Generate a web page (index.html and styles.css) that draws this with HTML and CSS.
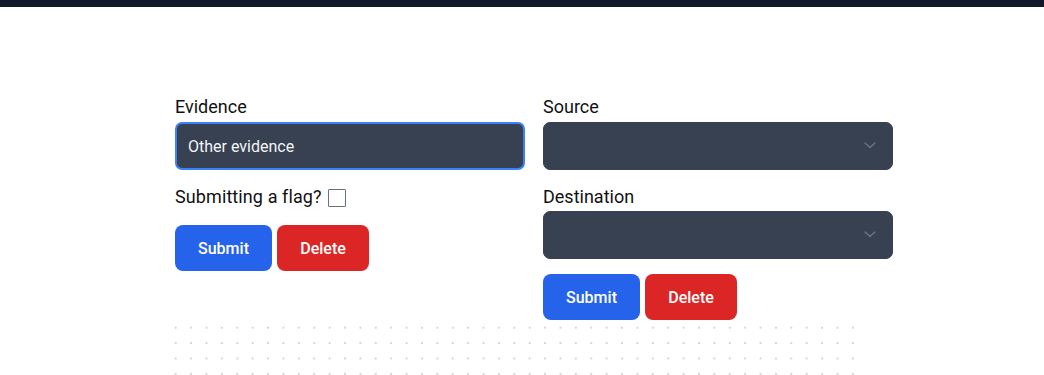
FILE: index.html
```html
<!DOCTYPE html>
<html lang="en">
<head>
  <meta charset="UTF-8">
  <title>Evidence</title>
  <link rel="stylesheet" href="styles.css">
</head>
<body>

  <!-- Top bar -->
  <div class="topbar"></div>

  <main class="page">
    <div class="forms">

      <!-- Evidence form -->
      <form class="col">
        <label for="evidence-input">Evidence</label>
        <input type="text" id="evidence-input" class="field field-focus" value="Other evidence">

        <div class="flag-row">
          <span>Submitting a flag?</span>
          <span class="checkbox"></span>
        </div>

        <div class="buttons buttons-left">
          <button type="button" class="btn btn-submit">Submit</button>
          <button type="button" class="btn btn-delete">Delete</button>
        </div>
      </form>

      <!-- Link form -->
      <form class="col">
        <label for="source-select">Source</label>
        <div class="select-wrap">
          <select id="source-select" class="field"></select>
          <svg class="chevron" width="12" height="7" viewBox="0 0 12 7"><path d="M1 1l5 4.5L11 1" fill="none" stroke="#6b7280" stroke-width="1.5" stroke-linecap="round" stroke-linejoin="round"/></svg>
        </div>

        <label for="dest-select" class="label-gap">Destination</label>
        <div class="select-wrap">
          <select id="dest-select" class="field"></select>
          <svg class="chevron" width="12" height="7" viewBox="0 0 12 7"><path d="M1 1l5 4.5L11 1" fill="none" stroke="#6b7280" stroke-width="1.5" stroke-linecap="round" stroke-linejoin="round"/></svg>
        </div>

        <div class="buttons">
          <button type="button" class="btn btn-submit">Submit</button>
          <button type="button" class="btn btn-delete">Delete</button>
        </div>
      </form>

    </div>

    <div class="dots"></div>
  </main>

</body>
</html>
```

FILE: styles.css
```css
body {
  margin: 0;
  padding: 0;
  background: #ffffff;
  font-family: Roboto, "Liberation Sans", sans-serif;
  font-size: 16px;
  color: #111111;
}

.topbar {
  height: 7px;
  background-color: #111827;
}

.page {
  padding: 88px 0 0 175px;
}

.forms {
  display: grid;
  grid-template-columns: 350px 350px;
  column-gap: 18px;
  align-items: start;
}

.col {
  display: flex;
  flex-direction: column;
  margin: 0;
}

label {
  display: block;
  font-size: 18px;
  line-height: 24px;
  margin-bottom: 3px;
}

.label-gap {
  margin-top: 15px;
  margin-bottom: 2px;
}

.field {
  box-sizing: border-box;
  width: 100%;
  height: 48px;
  margin: 0;
  padding: 0 12px;
  border: 1px solid #374151;
  border-radius: 7px;
  background-color: #374151;
  color: #f3f4f6;
  font-family: Roboto, "Liberation Sans", sans-serif;
  font-size: 16px;
  outline: none;
  appearance: none;
  -webkit-appearance: none;
}

.field-focus {
  border: 2px solid #3b82f6;
  padding-left: 11px;
}

.select-wrap {
  position: relative;
}

.chevron {
  position: absolute;
  right: 17px;
  top: 20px;
  pointer-events: none;
}

.flag-row {
  display: flex;
  align-items: center;
  gap: 6px;
  margin-top: 15px;
  font-size: 18px;
  line-height: 24px;
  letter-spacing: 0.1px;
}

.checkbox {
  box-sizing: border-box;
  width: 18px;
  height: 18px;
  margin-top: 1px;
  border: 1px solid #6b7280;
  border-radius: 1px;
  background: #ffffff;
}

.buttons {
  display: flex;
  gap: 5px;
  margin-top: 15px;
}

.buttons-left {
  margin-top: 16px;
}

.btn {
  height: 46px;
  padding: 0;
  border: none;
  border-radius: 8px;
  color: #ffffff;
  font-family: Roboto, "Liberation Sans", sans-serif;
  font-size: 16px;
  font-weight: 500;
  cursor: pointer;
}

.btn-submit {
  width: 97px;
  background-color: #2563eb;
}

.btn-delete {
  width: 92px;
  background-color: #dc2626;
}

.dots {
  width: 690px;
  height: 60px;
  margin-left: -7px;
  background-image: radial-gradient(circle, #d1d5db 1px, transparent 1.2px);
  background-size: 15.4px 15.4px;
  background-position: 0 0;
}
```
